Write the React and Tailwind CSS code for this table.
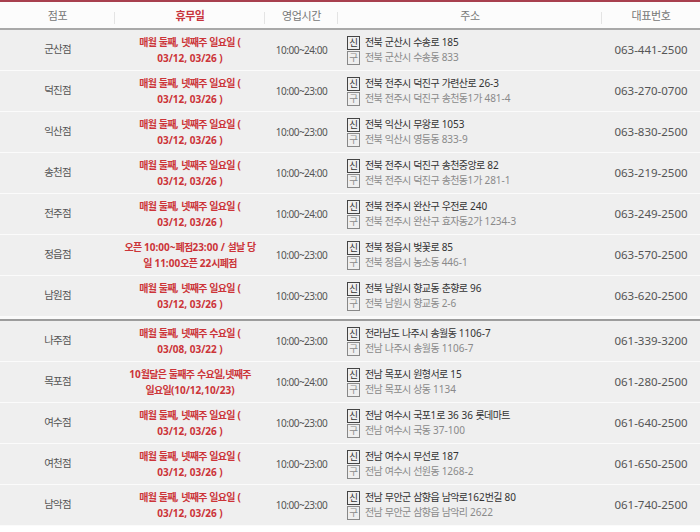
import React from 'react';

const stores1 = [
  { name: '군산점', off: ['매월 둘째, 넷째주 일요일 (', '03/12, 03/26 )'], time: '10:00~24:00', addr: ['전북 군산시 수송로 185', '전북 군산시 수송동 833'], tel: '063-441-2500' },
  { name: '덕진점', off: ['매월 둘째, 넷째주 일요일 (', '03/12, 03/26 )'], time: '10:00~23:00', addr: ['전북 전주시 덕진구 가련산로 26-3', '전북 전주시 덕진구 송천동1가 481-4'], tel: '063-270-0700' },
  { name: '익산점', off: ['매월 둘째, 넷째주 일요일 (', '03/12, 03/26 )'], time: '10:00~23:00', addr: ['전북 익산시 무왕로 1053', '전북 익산시 영등동 833-9'], tel: '063-830-2500' },
  { name: '송천점', off: ['매월 둘째, 넷째주 일요일 (', '03/12, 03/26 )'], time: '10:00~24:00', addr: ['전북 전주시 덕진구 송천중앙로 82', '전북 전주시 덕진구 송천동1가 281-1'], tel: '063-219-2500' },
  { name: '전주점', off: ['매월 둘째, 넷째주 일요일 (', '03/12, 03/26 )'], time: '10:00~24:00', addr: ['전북 전주시 완산구 우전로 240', '전북 전주시 완산구 효자동2가 1234-3'], tel: '063-249-2500' },
  { name: '정읍점', off: ['오픈 10:00~폐점23:00 / 설날 당', '일 11:00오픈 22시폐점'], time: '10:00~23:00', addr: ['전북 정읍시 벚꽃로 85', '전북 정읍시 농소동 446-1'], tel: '063-570-2500' },
  { name: '남원점', off: ['매월 둘째, 넷째주 일요일 (', '03/12, 03/26 )'], time: '10:00~23:00', addr: ['전북 남원시 향교동 춘향로 96', '전북 남원시 향교동 2-6'], tel: '063-620-2500' },
];

const stores2 = [
  { name: '나주점', off: ['매월 둘째, 넷째주 수요일 (', '03/08, 03/22 )'], time: '10:00~23:00', addr: ['전라남도 나주시 송월동 1106-7', '전남 나주시 송월동 1106-7'], tel: '061-339-3200' },
  { name: '목포점', off: ['10월달은 둘째주 수요일,넷째주', '일요일(10/12,10/23)'], time: '10:00~24:00', addr: ['전남 목포시 원형서로 15', '전남 목포시 상동 1134'], tel: '061-280-2500' },
  { name: '여수점', off: ['매월 둘째, 넷째주 일요일 (', '03/12, 03/26 )'], time: '10:00~23:00', addr: ['전남 여수시 국포1로 36 36 롯데마트', '전남 여수시 국동 37-100'], tel: '061-640-2500' },
  { name: '여천점', off: ['매월 둘째, 넷째주 일요일 (', '03/12, 03/26 )'], time: '10:00~23:00', addr: ['전남 여수시 무선로 187', '전남 여수시 선원동 1268-2'], tel: '061-650-2500' },
  { name: '남악점', off: ['매월 둘째, 넷째주 일요일 (', '03/12, 03/26 )'], time: '10:00~23:00', addr: ['전남 무안군 삼향읍 남악로162번길 80', '전남 무안군 삼향읍 남악리 2622'], tel: '061-740-2500' },
];

const cols = 'grid grid-cols-[115px_150px_73px_264px_98px]';

// hangul runs get a tighter size so the text keeps the narrow look of the original
const HANGUL = /([\uAC00-\uD7A3]+)/;
function Ko({ text, k = 'text-[10px] tracking-[-0.6px]' }) {
  return text
    .split(HANGUL)
    .map((p, i) => (HANGUL.test(p) ? <span key={i} className={k}>{p}</span> : p));
}

function HeadCell({ children, red, line = true }) {
  return (
    <div className="relative flex items-center justify-center pt-[2px]">
      <span className={red ? 'text-[#c8343c] font-bold' : 'text-[#777]'}>
        <Ko text={children} k="text-[11px] tracking-[-0.4px]" />
      </span>
      {line && <span className="absolute right-0 top-[10px] h-[12px] w-px bg-[#e4e4e4]" />}
    </div>
  );
}

function Row({ s }) {
  return (
    <div className={`${cols} h-[41px] bg-[#efefef] border-b border-[#fbfbfb] items-center`}>
      <div className="text-center text-[#555]">
        <Ko text={s.name} k="text-[10.5px] tracking-[-0.8px]" />
      </div>
      <div className="text-center text-[#cc3438] font-bold leading-[16px] whitespace-nowrap">
        <div><Ko text={s.off[0]} k="text-[10px] tracking-[-0.7px]" /></div>
        <div><Ko text={s.off[1]} k="text-[10px] tracking-[-0.7px]" /></div>
      </div>
      <div className="text-center text-[#555] tracking-[-0.5px]">{s.time}</div>
      <div className="pl-[9px] leading-[15px] whitespace-nowrap">
        <div className="flex items-center gap-[5px] text-[#333]">
          <span className="inline-flex h-[14px] w-[13px] items-center justify-center border border-[#444] text-[9.5px] leading-none">신</span>
          <span><Ko text={s.addr[0]} /></span>
        </div>
        <div className="flex items-center gap-[5px] text-[#8a8a8a]">
          <span className="inline-flex h-[14px] w-[13px] items-center justify-center border border-[#888] text-[9.5px] leading-none">구</span>
          <span><Ko text={s.addr[1]} /></span>
        </div>
      </div>
      <div className="text-center text-[#555] text-[11.5px]">{s.tel}</div>
    </div>
  );
}

export default function App() {
  return (
    <div
      className="w-[700px] h-[532px] bg-white text-[10px] overflow-hidden"
      style={{ fontFamily: '"Noto Sans", "Noto Sans CJK KR", sans-serif' }}
    >
      <div className="h-[2px] bg-[#a8404e]" />
      <div className={`${cols} h-[28px] bg-[#fcfcfc] border-b-2 border-[#a9a9a9] text-[11px]`}>
        <HeadCell>점포</HeadCell>
        <HeadCell red>휴무일</HeadCell>
        <HeadCell>영업시간</HeadCell>
        <HeadCell>주소</HeadCell>
        <HeadCell line={false}>대표번호</HeadCell>
      </div>
      {stores1.map((s) => (
        <Row key={s.name} s={s} />
      ))}
      <div className="h-[4px] bg-[#fafafa] border-b-2 border-[#9c9c9c]" />
      {stores2.map((s) => (
        <Row key={s.name} s={s} />
      ))}
    </div>
  );
}
